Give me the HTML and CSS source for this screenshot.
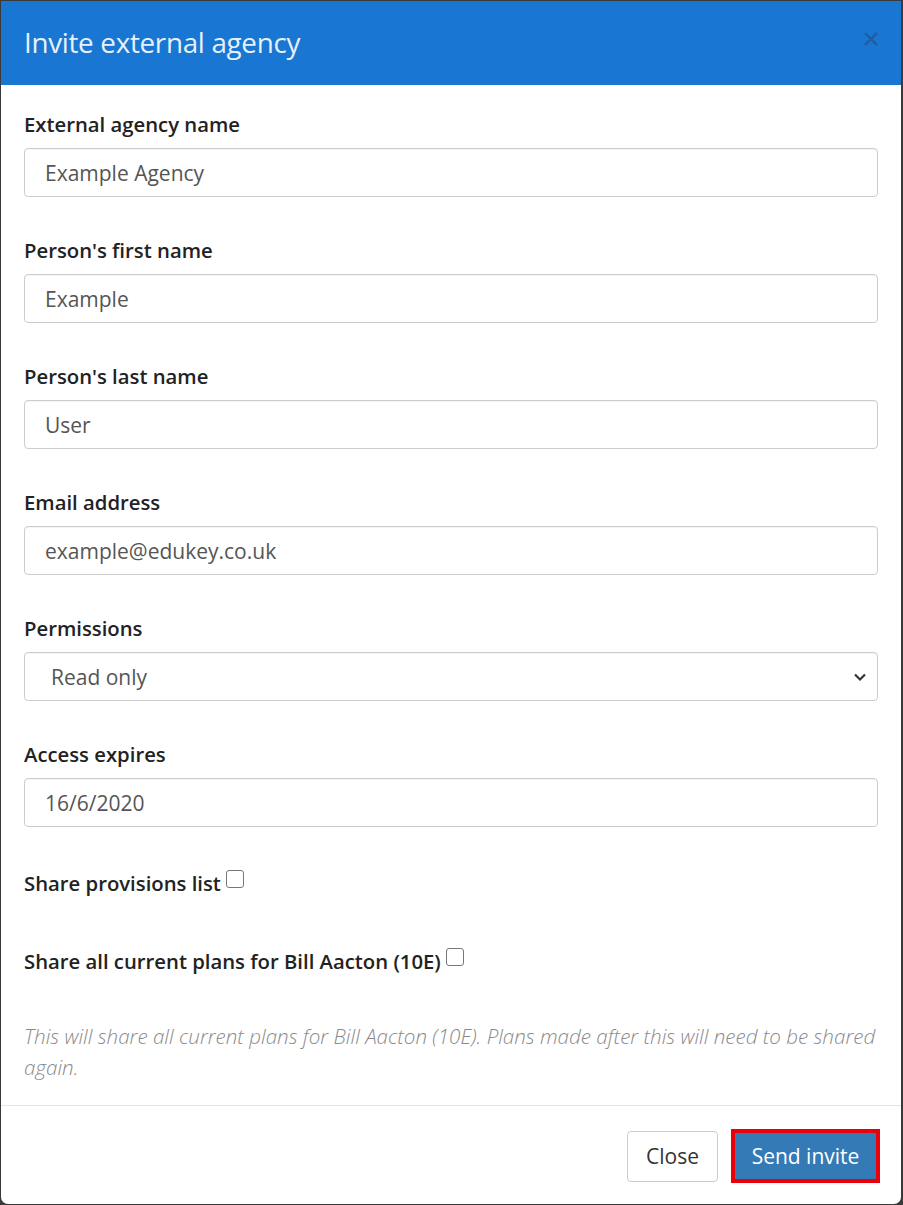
FILE: index.html
```html
<!DOCTYPE html>
<html>
<head>
<meta charset="utf-8">
<link rel="stylesheet" href="styles.css">
</head>
<body>
<div class="modal">
  <div class="modal-header">
    <h4 class="modal-title">Invite external agency</h4>
    <svg class="close" width="16" height="16" viewBox="0 0 16 16"><path d="M2 2 L14 14 M14 2 L2 14" stroke="#245b9c" stroke-width="2.4" fill="none"/></svg>
  </div>
  <div class="modal-body">
    <div class="form-group">
      <label class="label">External agency name</label>
      <div class="input">Example Agency</div>
    </div>
    <div class="form-group">
      <label class="label">Person's first name</label>
      <div class="input">Example</div>
    </div>
    <div class="form-group">
      <label class="label">Person's last name</label>
      <div class="input">User</div>
    </div>
    <div class="form-group">
      <label class="label">Email address</label>
      <div class="input">example@edukey.co.uk</div>
    </div>
    <div class="form-group">
      <label class="label">Permissions</label>
      <div class="input select">
        <span>Read only</span>
        <svg class="chev" width="14" height="10" viewBox="0 0 14 10"><path d="M2 2.5 L7 7.5 L12 2.5" fill="none" stroke="#333" stroke-width="2.2"/></svg>
      </div>
    </div>
    <div class="form-group">
      <label class="label">Access expires</label>
      <div class="input">16/6/2020</div>
    </div>
    <div class="check-group first">
      <label class="label">Share provisions list</label><span class="checkbox"></span>
    </div>
    <div class="check-group">
      <label class="label">Share all current plans for Bill Aacton (10E)</label><span class="checkbox"></span>
    </div>
    <p class="help">This will share all current plans for Bill Aacton (10E). Plans made after this will need to be shared again.</p>
  </div>
  <div class="modal-footer">
    <span class="btn btn-default">Close</span>
    <span class="btn-outline"><span class="btn btn-primary">Send invite</span></span>
  </div>
</div>
</body>
</html>
```
FILE: styles.css
```css
html, body {
  margin: 0;
  padding: 0;
  background: #3a3a3a;
  font-family: "Open Sans", "Noto Sans", sans-serif;
}
body {
  padding: 1px 2px 0 1px;
  height: 1205px;
  box-sizing: border-box;
}
.modal {
  background: #fff;
  border-radius: 0 0 7px 7px;
  overflow: hidden;
}
.modal-header {
  background: #1976d2;
  height: 84px;
  display: flex;
  align-items: center;
  justify-content: space-between;
  padding: 0 23px 0 23px;
  box-sizing: border-box;
}
.modal-title {
  margin: 0;
  font-weight: 400;
  font-size: 27.8px;
  color: #e6f1fb;
  letter-spacing: -0.3px;
  padding-bottom: 2px;
}
.close {
  display: block;
  margin-top: -9px;
  margin-right: -1px;
}
.modal-body {
  padding: 25px 23px 22px 23px;
}
.form-group {
  margin-bottom: 39px;
}
.label {
  display: block;
  font-weight: 600;
  font-size: 20.3px;
  line-height: 28px;
  color: #222;
  margin-bottom: 10px;
}
.input {
  height: 49px;
  box-sizing: border-box;
  border: 1px solid #cdcdcd;
  border-radius: 4px;
  padding: 0 20px;
  display: flex;
  align-items: center;
  font-size: 21px;
  color: #555;
  box-shadow: inset 0 1px 1px rgba(0,0,0,0.05);
}
.select {
  justify-content: space-between;
  padding-left: 26px;
  padding-right: 10px;
}
.chev {
  display: block;
}
.check-group {
  display: flex;
  align-items: center;
  height: 28px;
  margin-bottom: 50px;
}
.check-group.first {
  padding-top: 3px;
}
.check-group .label {
  display: inline;
  margin-bottom: 0;
}
.checkbox {
  border: 1px solid #777;
  border-radius: 3px;
  margin-left: 5px;
  margin-top: -8px;
  box-sizing: border-box;
  width: 18px;
  height: 18px;
}
.help {
  margin: -4px -6px 0 0;
  font-style: italic;
  font-weight: 300;
  font-size: 20.6px;
  line-height: 31px;
  color: #8a8a8a;
}
.modal-footer {
  border-top: 1px solid #e5e5e5;
  padding: 23px 21px 21px;
  display: flex;
  justify-content: flex-end;
  align-items: center;
  gap: 13px;
}
.btn {
  display: inline-flex;
  align-items: center;
  justify-content: center;
  box-sizing: border-box;
  font-size: 21px;
  border-radius: 4px;
}
.btn-default {
  height: 51px;
  width: 91px;
  border: 1px solid #ccc;
  color: #333;
  background: #fff;
}
.btn-outline {
  display: inline-block;
  border: 4px solid #e8000b;
  line-height: 0;
}
.btn-primary {
  height: 46px;
  width: 141px;
  background: #337ab7;
  color: #fff;
  border-radius: 0;
}
```
